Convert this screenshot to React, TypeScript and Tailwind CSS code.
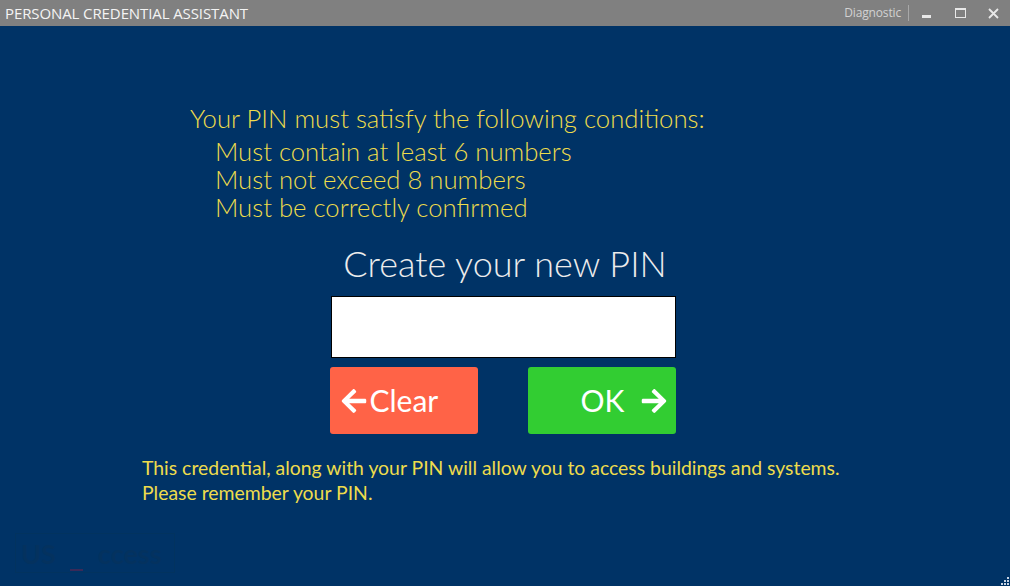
import { FaArrowLeft, FaArrowRight } from 'react-icons/fa'

function TitleBar() {
    return (
        <div className="flex h-[26px] items-center bg-[#808080] font-['Open_Sans','Noto_Sans',sans-serif]">
            <span className="pl-[5px] text-[15px] text-[#f4f4f4] tracking-[-0.1px]">PERSONAL CREDENTIAL ASSISTANT</span>
            <div className="ml-auto flex items-center h-full">
                <span className="text-[#d2d2d2] text-[12px] tracking-[-0.15px] pr-[7px]">Diagnostic</span>
                <div className="h-[16px] w-px bg-[#a8a8a8]"></div>
                <button className="w-[35px] h-full flex items-center justify-center">
                    <svg width="10" height="10" viewBox="0 0 10 10">
                        <rect x="0" y="7" width="9" height="3" fill="#e8e8e8" />
                    </svg>
                </button>
                <button className="w-[32px] h-full flex items-center justify-center">
                    <svg width="11" height="10" viewBox="0 0 11 10">
                        <rect x="0.5" y="0.5" width="10" height="9" fill="none" stroke="#e8e8e8" />
                        <rect x="0" y="0" width="11" height="2" fill="#e8e8e8" />
                    </svg>
                </button>
                <button className="w-[34px] h-full flex items-center justify-center">
                    <svg width="11" height="11" viewBox="0 0 11 11">
                        <path d="M1 1 L10 10 M10 1 L1 10" stroke="#e8e8e8" strokeWidth="1.8" />
                    </svg>
                </button>
            </div>
        </div>
    )
}

export default function App() {
    return (
        <div className="w-[1010px] h-[586px] flex flex-col bg-[#003366] overflow-hidden">
            <TitleBar />
            <div className="relative flex-1 font-['Lato',sans-serif]">
                <div className="pt-[78px] pl-[190px] text-[#eedc4c] font-light">
                    <p className="text-[25.7px] leading-[28px]">Your PIN must satisfy the following conditions:</p>
                    <div className="pl-[25px] text-[25.7px] leading-[28px] mt-[5px]">
                        <p>Must contain at least 6 numbers</p>
                        <p>Must not exceed 8 numbers</p>
                        <p>Must be correctly confirmed</p>
                    </div>
                </div>

                <div className="flex flex-col items-center">
                    <h1 className="mt-[20px] text-[36px] leading-[44px] font-light text-[#ececec]">Create your new PIN</h1>
                    <input
                        type="password"
                        className="mt-[11px] -ml-[3px] w-[345px] h-[62px] bg-white border border-black outline-none"
                    />
                    <div className="mt-[9px] -ml-[5px] w-[346px] flex justify-between">
                        <button className="w-[148px] h-[67px] rounded-[3px] bg-[#ff6347] text-white text-[30px] flex items-center pl-[10px] gap-[2px]">
                            <FaArrowLeft className="w-[28px] h-[28px]" />
                            <span>Clear</span>
                        </button>
                        <button className="w-[148px] h-[67px] rounded-[3px] bg-[#32cd32] text-white text-[30px] flex items-center pl-[53px] gap-[16px]">
                            <span>OK</span>
                            <FaArrowRight className="w-[28px] h-[28px]" />
                        </button>
                    </div>
                </div>

                <div className="pl-[142px] mt-[21px] text-[#eedc4c] text-[19.4px] leading-[25px]">
                    <p>This credential, along with your PIN will allow you to access buildings and systems.</p>
                    <p>Please remember your PIN.</p>
                </div>

                <div className="absolute left-[15px] top-[507px] w-[160px] h-[40px] border border-[#02335f] flex items-center pl-[5px] text-[#04325f] font-bold text-[27px] leading-none">
                    <span>US</span>
                    <span className="w-[42px] relative">
                        <span className="absolute left-[14px] top-[16px] w-[13px] h-[2px] bg-[#3a2a58]"></span>
                    </span>
                    <span>ccess</span>
                </div>

                <svg className="absolute right-0 bottom-0" width="10" height="10" viewBox="0 0 10 10">
                    <rect x="7" y="1" width="2" height="2" fill="#c8d4e4" />
                    <rect x="4" y="4" width="2" height="2" fill="#c8d4e4" />
                    <rect x="7" y="4" width="2" height="2" fill="#c8d4e4" />
                    <rect x="1" y="7" width="2" height="2" fill="#c8d4e4" />
                    <rect x="4" y="7" width="2" height="2" fill="#c8d4e4" />
                    <rect x="7" y="7" width="2" height="2" fill="#c8d4e4" />
                </svg>
            </div>
        </div>
    )
}
